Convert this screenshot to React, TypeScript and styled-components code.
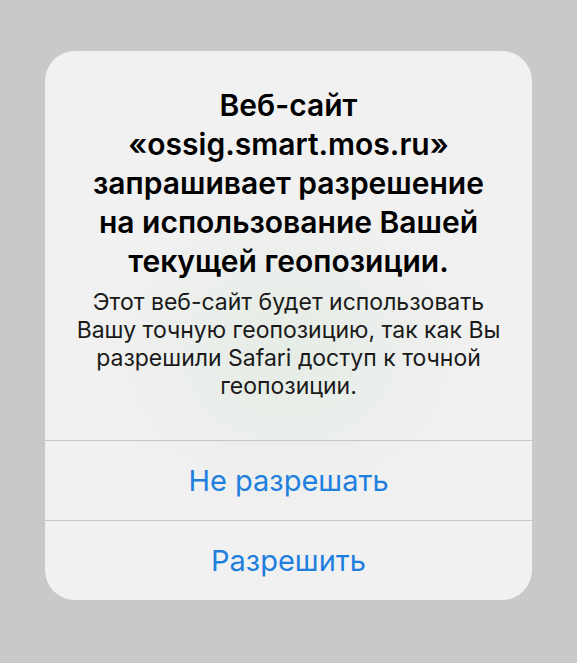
import React from "react";
import styled, { createGlobalStyle } from "styled-components";

const GlobalStyle = createGlobalStyle`
  html, body {
    margin: 0;
    padding: 0;
    background: #c9c9c9;
  }
  body {
    font-family: Inter, "Noto Sans", "Liberation Sans", sans-serif;
    -webkit-font-smoothing: antialiased;
  }
`;

const Screen = styled.div`
  min-height: 663px;
  display: flex;
  justify-content: center;
  align-items: flex-start;
  padding-top: 51px;
  box-sizing: border-box;
`;

const Alert = styled.div`
  width: 487px;
  border-radius: 30px;
  overflow: hidden;
  background:
    radial-gradient(ellipse 60% 45% at 50% 55%, rgba(220, 232, 220, 0.55), rgba(240, 240, 240, 0) 70%),
    #f1f1f1;
  display: flex;
  flex-direction: column;
`;

const Body = styled.div`
  padding: 35px 16px 40px;
  display: flex;
  flex-direction: column;
  gap: 7px;
  text-align: center;
`;

const Title = styled.h2`
  margin: 0;
  font-size: 30px;
  line-height: 39px;
  font-weight: 600;
  color: #000;
`;

const Message = styled.p`
  margin: 0;
  font-size: 23px;
  line-height: 28px;
  font-weight: 400;
  color: #1a1a1a;
`;

const Action = styled.button`
  height: 80px;
  border: 0;
  border-top: 1px solid #c6c6c6;
  background: transparent;
  font-family: inherit;
  font-size: 29px;
  font-weight: 400;
  color: #1f7fdf;
  padding: 0;
  cursor: pointer;
`;

export default function App() {
  return (
    <>
      <GlobalStyle />
      <Screen>
        <Alert role="alertdialog">
          <Body>
            <Title>
              Веб-сайт
              <br />
              «ossig.smart.mos.ru»
              <br />
              запрашивает разрешение
              <br />
              на использование Вашей
              <br />
              текущей геопозиции.
            </Title>
            <Message>
              Этот веб-сайт будет использовать
              <br />
              Вашу точную геопозицию, так как Вы
              <br />
              разрешили Safari доступ к точной
              <br />
              геопозиции.
            </Message>
          </Body>
          <Action>Не разрешать</Action>
          <Action>Разрешить</Action>
        </Alert>
      </Screen>
    </>
  );
}
